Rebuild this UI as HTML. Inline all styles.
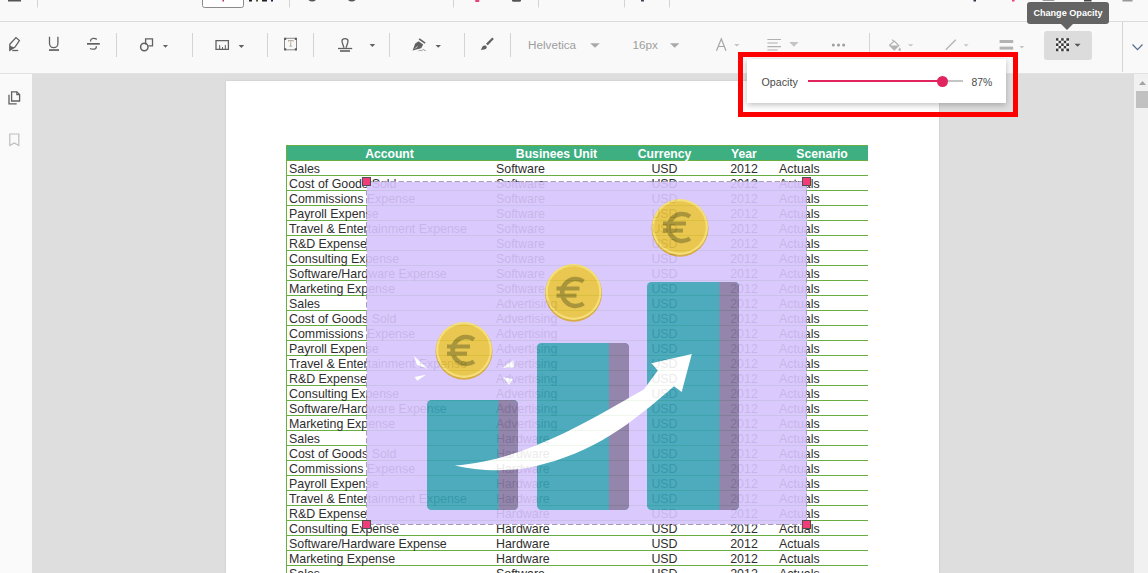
<!DOCTYPE html>
<html><head><meta charset="utf-8"><style>
*{box-sizing:border-box}
html,body{margin:0;padding:0}
body{width:1148px;height:573px;overflow:hidden;position:relative;background:#f8f8f8;font-family:"Liberation Sans",sans-serif}
.abs{position:absolute}
#tb1{position:absolute;left:0;top:0;width:1148px;height:22px;background:#f9f9f9;border-bottom:1px solid #dcdcdc}
#tb2{position:absolute;left:0;top:22px;width:1148px;height:52px;background:#f9f9f9;border-bottom:1px solid #e2e2e2}
.sep{position:absolute;width:1px;background:#d6d6d6}
#side{position:absolute;left:0;top:74px;width:32px;height:499px;background:#fafafa}
#view{position:absolute;left:32px;top:74px;width:1102px;height:499px;background:#dedede}
#scroll{position:absolute;left:1134px;top:74px;width:14px;height:499px;background:#f1f1f1}
#page{position:absolute;left:226px;top:81px;width:713px;height:492px;background:#fff;box-shadow:0 0 2px rgba(0,0,0,0.12)}
.th{position:absolute;left:286px;width:582px;height:16px;background:#3daf80;border-top:1px solid #68ae40;border-bottom:1px solid #68ae40}
.ht{position:absolute;top:147px;height:15px;line-height:15px;text-align:center;color:#fff;font-weight:bold;font-size:12.2px}
.rl{position:absolute;left:286px;width:582px;height:1px;background:#68ae40}
.vl{position:absolute;left:286px;top:145px;width:1px;height:428px;background:#68ae40}
.tx{position:absolute;height:15px;line-height:19px;font-size:12.4px;color:#2e2e2e;white-space:nowrap}
.tx.c{text-align:center}
#ov{position:absolute;left:367px;top:182px;width:440px;height:342px;opacity:0.9}
.hd{position:absolute;width:9px;height:9px;background:#f23c7a;border:1px solid #505050}
.tbt{font-size:11.7px;line-height:15px;white-space:nowrap}
#tip{position:absolute;left:1027px;top:2px;width:82px;height:22px;background:#646464;border-radius:3px;color:#fff;font-size:9.1px;font-weight:bold;line-height:22px;text-align:center}
#tip:after{content:"";position:absolute;left:34px;top:22px;border-left:6px solid transparent;border-right:6px solid transparent;border-top:6px solid #646464}
#red{position:absolute;left:738px;top:52px;width:280px;height:65px;border:5px solid #ff0000}
#pop{position:absolute;left:747px;top:59px;width:259px;height:44px;background:#fff;box-shadow:0 2px 6px rgba(0,0,0,0.25)}
</style></head>
<body>
<div id="tb1"></div>
<div id="tb2"></div>
<div class="abs" style="left:1044px;top:31px;width:48px;height:29px;background:#dcdcdc;border-radius:3px"></div>
<svg class="abs" style="left:0;top:0" width="1148" height="73" viewBox="0 0 1148 73">
<g fill="none" stroke="#d4d4d4" stroke-width="1">
<path d="M37.5,0 V7.5 M289.5,0 V7.5 M453.5,0 V7.5 M538.5,0 V7.5 M624.5,0 V7.5 M669.5,0 V7.5"/>
<path d="M116.5,33 V57 M192.5,33 V57 M267.5,33 V57 M313.5,33 V57 M389.5,33 V57 M464.5,33 V57 M510.5,33 V57 M869.5,33 V57 M1122.5,22 V72"/>
</g>
<!-- row1 marks -->
<rect x="8" y="0" width="13" height="1.5" fill="#555"/>
<rect x="202.5" y="-4" width="41" height="11.5" rx="2" fill="#fff" stroke="#8a8a8a" stroke-width="1"/>
<rect x="222.5" y="0" width="1.5" height="1.5" fill="#b0306a"/>
<rect x="249" y="0" width="3" height="1.5" fill="#222"/><rect x="256" y="0" width="2" height="1.5" fill="#553"/><rect x="262" y="0" width="5" height="1.5" fill="#222"/><rect x="271" y="0" width="2" height="1.5" fill="#225"/>
<circle cx="312.2" cy="-3.8" r="4.6" fill="none" stroke="#555" stroke-width="1.5"/>
<circle cx="351.8" cy="-3.8" r="4.6" fill="none" stroke="#555" stroke-width="1.5"/>
<rect x="475" y="0" width="4.5" height="2" rx="1" fill="#e8407a"/>
<rect x="512" y="-2" width="9" height="3.8" rx="1.5" fill="#555"/>
<rect x="641" y="0" width="3" height="1.5" fill="#445"/>
<rect x="973.5" y="0" width="2.5" height="1.5" fill="#334"/>
<rect x="1012" y="0" width="2.5" height="1.5" fill="#e8407a"/>
<rect x="1042.5" y="-2" width="12" height="3" rx="1" fill="#999"/>
<rect x="1084" y="0" width="7.5" height="1.5" fill="#444"/>
<rect x="1122.5" y="0" width="10" height="1.5" fill="#999"/>
<!-- row2 icons -->
<g fill="none" stroke="#616161" stroke-width="1.3" stroke-linejoin="miter">
<path d="M9.8,44.2 L16,37.6 L19.4,40.5 L15,47 L9.8,50.3 Z"/>
<path d="M12.3,50.5 H18.2"/>
<path d="M49.5,36.8 V43.5 A4.2,4.2 0 0 0 57.9,43.5 V36.8"/>
<path d="M96.8,39.4 Q95,38.2 93.3,38.4 Q90.2,38.8 90.6,41.5"/>
<path d="M96.2,46.2 Q96.8,49.2 93,49.2 Q91,49.2 90,48.5"/>
<path d="M145.6,44.4 V38.9 H152.5 V45.8 H148.4"/>
<circle cx="144.3" cy="47" r="3.7" stroke-width="1.5"/>
<path d="M216,40.6 H228.4 V49.3 H216 Z"/>
<path d="M338,48.5 H352.2"/>
<path d="M344,47.8 C343,44.8 341.9,42.6 342,40.8 C342.3,37.8 347.7,37.8 348,40.8 C348.1,42.6 347,44.8 346,47.8"/>
<path d="M284.5,38.3 H296.5 V49.8 H284.5 Z" stroke-width="0.9" stroke="#7a7a7a"/>
<path d="M945.8,49.8 L955.8,39.8" stroke="#b3b3b3"/>
<path d="M767.4,39.5 H781 M767.4,43 H777.7 M767.4,46.6 H781 M767.4,50 H777.7" stroke="#b0b0b0" stroke-width="1.2"/>
<path d="M889.6,45.3 L894.2,41 L898.8,45.5 L894.2,50 Z M892,39.6 L894.2,41.6" stroke="#b3b3b3" stroke-width="1.2"/>
<path d="M1132.5,44.5 L1137.5,49.6 L1142.5,44.5" stroke="#56708c" stroke-width="1.3"/>
<path d="M716.5,50.8 L721.3,38.8 L726,50.8 M718.2,46.5 H724.4" stroke="#a6a6a6" stroke-width="1.2"/>
</g>
<g fill="#616161">
<path d="M10,45.8 L14.5,47.4 L9.8,50.3 Z"/>
<rect x="49" y="49.2" width="10" height="1.7"/>
<rect x="87" y="43" width="12.8" height="1.7"/>
<path d="M162.9,45.1 H168 L165.45,47.8 Z"/>
<path d="M219.2,44.9 h1 v4 h-1 Z M222,46.9 h1 v2 h-1 Z M224.8,44.9 h1 v4 h-1 Z"/>
<path d="M238.6,45.1 H244.2 L241.4,48 Z"/>
<rect x="284" y="37.8" width="2.2" height="2.2"/><rect x="294.8" y="37.8" width="2.2" height="2.2"/><rect x="284" y="48.2" width="2.2" height="2.2"/><rect x="294.8" y="48.2" width="2.2" height="2.2"/>
<rect x="340" y="50.2" width="10" height="1.6"/>
<path d="M369.6,44.1 H375.2 L372.4,46.9 Z"/>
<path d="M419.6,38.3 L425.6,42.5 L424.6,43.8 L418.6,39.6 Z"/>
<path d="M415.2,43.6 L418.6,41.2 L423.2,44.6 L421.2,48.2 L412.6,50.6 Z M413.6,49.6 L417.2,46.2 L417.8,46.8 Z" fill-rule="evenodd"/>
<path d="M435.5,45.1 H441 L438.25,47.8 Z"/>
<path d="M493.8,38.9 L487.8,45.3 L486,43.7 L492.3,37.6 Z"/>
<path d="M485.5,45.5 C487.5,46.2 487.2,49.3 484,49.6 L480.8,49.9 C482,48.8 481.8,46.5 483.4,45.8 Z"/>
<path d="M1074.5,43.8 H1080.6 L1077.55,46.8 Z" fill="#555"/>
</g>
<path d="M418.5,50.8 c1.5,-1.2 2.5,0.5 3.5,-0.4 c1,-0.9 1.7,-1.5 2.2,-0.2 l1.5,0.5" fill="none" stroke="#8a8a8a" stroke-width="0.9"/>
<g fill="#a9a9a9">
<path d="M288,40.3 H293.6 V41.8 H292.8 V41.1 H291.2 V45.8 H292.2 V46.6 H289.4 V45.8 H290.4 V41.1 H288.8 V41.8 H288 Z" fill="#a89a8a"/>
</g>
<g fill="#c4c4c4">
<path d="M734,44.1 H739.6 L736.8,46.5 Z"/>
<path d="M789.2,41.9 H798.6 L793.9,46.8 Z"/>
<path d="M907.9,44.3 H913.4 L910.65,46.5 Z"/>
<path d="M963.6,44.3 H968.7 L966.15,46.5 Z"/>
<path d="M1019.5,46.1 H1024.2 L1021.85,48.6 Z"/>
<path d="M590.2,43.2 H599.8 L595,47.8 Z" fill="#a9a9a9"/>
<path d="M670,43.2 H679.4 L674.7,47.8 Z" fill="#a9a9a9"/>
</g>
<g fill="#b3b3b3">
<path d="M889.8,45.5 H898.6 L894.2,49.9 Z"/>
<path d="M899.7,47.2 L901,49.6 A1.2,1.2 0 0 1 898.4,49.6 Z"/>
<rect x="999.6" y="40" width="13.6" height="3"/>
<rect x="999.6" y="46.6" width="13.6" height="3"/>
</g>
<g fill="#9e9e9e">
<circle cx="833.3" cy="44.9" r="1.5"/><circle cx="838.5" cy="44.9" r="1.5"/><circle cx="843.6" cy="44.9" r="1.5"/>
</g>
<g><rect x="1056.0" y="38.2" width="2.6" height="2.6" fill="#3a3a3a"/><rect x="1058.6" y="38.2" width="2.6" height="2.6" fill="#f4f4f4"/><rect x="1061.2" y="38.2" width="2.6" height="2.6" fill="#3a3a3a"/><rect x="1063.8" y="38.2" width="2.6" height="2.6" fill="#f4f4f4"/><rect x="1066.4" y="38.2" width="2.6" height="2.6" fill="#3a3a3a"/><rect x="1056.0" y="40.8" width="2.6" height="2.6" fill="#f4f4f4"/><rect x="1058.6" y="40.8" width="2.6" height="2.6" fill="#3a3a3a"/><rect x="1061.2" y="40.8" width="2.6" height="2.6" fill="#f4f4f4"/><rect x="1063.8" y="40.8" width="2.6" height="2.6" fill="#3a3a3a"/><rect x="1066.4" y="40.8" width="2.6" height="2.6" fill="#f4f4f4"/><rect x="1056.0" y="43.4" width="2.6" height="2.6" fill="#3a3a3a"/><rect x="1058.6" y="43.4" width="2.6" height="2.6" fill="#f4f4f4"/><rect x="1061.2" y="43.4" width="2.6" height="2.6" fill="#3a3a3a"/><rect x="1063.8" y="43.4" width="2.6" height="2.6" fill="#f4f4f4"/><rect x="1066.4" y="43.4" width="2.6" height="2.6" fill="#3a3a3a"/><rect x="1056.0" y="46.0" width="2.6" height="2.6" fill="#f4f4f4"/><rect x="1058.6" y="46.0" width="2.6" height="2.6" fill="#3a3a3a"/><rect x="1061.2" y="46.0" width="2.6" height="2.6" fill="#f4f4f4"/><rect x="1063.8" y="46.0" width="2.6" height="2.6" fill="#3a3a3a"/><rect x="1066.4" y="46.0" width="2.6" height="2.6" fill="#f4f4f4"/><rect x="1056.0" y="48.6" width="2.6" height="2.6" fill="#3a3a3a"/><rect x="1058.6" y="48.6" width="2.6" height="2.6" fill="#f4f4f4"/><rect x="1061.2" y="48.6" width="2.6" height="2.6" fill="#3a3a3a"/><rect x="1063.8" y="48.6" width="2.6" height="2.6" fill="#f4f4f4"/><rect x="1066.4" y="48.6" width="2.6" height="2.6" fill="#3a3a3a"/></g>
</svg>

<div class="abs tbt" style="left:528px;top:37px;color:#9e9e9e">Helvetica</div>
<div class="abs tbt" style="left:632.5px;top:37px;color:#9e9e9e">16px</div>

<div id="side"></div>
<svg class="abs" style="left:0;top:73px" width="32" height="100" viewBox="0 73 32 100">
<g fill="none" stroke="#616161" stroke-width="1.3">
<path d="M11.6,91.8 H16.8 L19.6,94.6 V101 H11.6 Z"/>
<path d="M16.8,91.8 V94.6 H19.6" stroke-width="1.1"/>
<path d="M9,94.8 V103.9 H16.7"/>
</g>
<path d="M9.8,134 H18.8 V145.5 L14.3,143 L9.8,145.5 Z" fill="none" stroke="#bdbdbd" stroke-width="1.2"/>
</svg>
<div id="view"></div>
<div id="scroll"></div>
<svg class="abs" style="left:1134px;top:73px" width="14" height="40"><path d="M5,11.9 L8.5,8 L12,11.9 Z" fill="#a3a3a3"/><rect x="2" y="18" width="12" height="17" fill="#c1c1c1"/></svg>
<div id="page"></div>
<div class="th" style="top:145px"></div>
<div class="ht" style="left:286px;width:207px">Account</div>
<div class="ht" style="left:493px;width:127px">Businees Unit</div>
<div class="ht" style="left:620px;width:89px">Currency</div>
<div class="ht" style="left:709px;width:70px">Year</div>
<div class="ht" style="left:776px;width:92px">Scenario</div>
<div class="rl" style="top:175px"></div>
<div class="tx" style="left:289px;top:160px">Sales</div>
<div class="tx" style="left:496px;top:160px">Software</div>
<div class="tx c" style="left:620px;width:89px;top:160px">USD</div>
<div class="tx c" style="left:709px;width:70px;top:160px">2012</div>
<div class="tx" style="left:779px;top:160px">Actuals</div>
<div class="rl" style="top:190px"></div>
<div class="tx" style="left:289px;top:175px">Cost of Goods Sold</div>
<div class="tx" style="left:496px;top:175px">Software</div>
<div class="tx c" style="left:620px;width:89px;top:175px">USD</div>
<div class="tx c" style="left:709px;width:70px;top:175px">2012</div>
<div class="tx" style="left:779px;top:175px">Actuals</div>
<div class="rl" style="top:205px"></div>
<div class="tx" style="left:289px;top:190px">Commissions Expense</div>
<div class="tx" style="left:496px;top:190px">Software</div>
<div class="tx c" style="left:620px;width:89px;top:190px">USD</div>
<div class="tx c" style="left:709px;width:70px;top:190px">2012</div>
<div class="tx" style="left:779px;top:190px">Actuals</div>
<div class="rl" style="top:220px"></div>
<div class="tx" style="left:289px;top:205px">Payroll Expense</div>
<div class="tx" style="left:496px;top:205px">Software</div>
<div class="tx c" style="left:620px;width:89px;top:205px">USD</div>
<div class="tx c" style="left:709px;width:70px;top:205px">2012</div>
<div class="tx" style="left:779px;top:205px">Actuals</div>
<div class="rl" style="top:235px"></div>
<div class="tx" style="left:289px;top:220px">Travel &amp; Entertainment Expense</div>
<div class="tx" style="left:496px;top:220px">Software</div>
<div class="tx c" style="left:620px;width:89px;top:220px">USD</div>
<div class="tx c" style="left:709px;width:70px;top:220px">2012</div>
<div class="tx" style="left:779px;top:220px">Actuals</div>
<div class="rl" style="top:250px"></div>
<div class="tx" style="left:289px;top:235px">R&amp;D Expense</div>
<div class="tx" style="left:496px;top:235px">Software</div>
<div class="tx c" style="left:620px;width:89px;top:235px">USD</div>
<div class="tx c" style="left:709px;width:70px;top:235px">2012</div>
<div class="tx" style="left:779px;top:235px">Actuals</div>
<div class="rl" style="top:265px"></div>
<div class="tx" style="left:289px;top:250px">Consulting Expense</div>
<div class="tx" style="left:496px;top:250px">Software</div>
<div class="tx c" style="left:620px;width:89px;top:250px">USD</div>
<div class="tx c" style="left:709px;width:70px;top:250px">2012</div>
<div class="tx" style="left:779px;top:250px">Actuals</div>
<div class="rl" style="top:280px"></div>
<div class="tx" style="left:289px;top:265px">Software/Hardware Expense</div>
<div class="tx" style="left:496px;top:265px">Software</div>
<div class="tx c" style="left:620px;width:89px;top:265px">USD</div>
<div class="tx c" style="left:709px;width:70px;top:265px">2012</div>
<div class="tx" style="left:779px;top:265px">Actuals</div>
<div class="rl" style="top:295px"></div>
<div class="tx" style="left:289px;top:280px">Marketing Expense</div>
<div class="tx" style="left:496px;top:280px">Software</div>
<div class="tx c" style="left:620px;width:89px;top:280px">USD</div>
<div class="tx c" style="left:709px;width:70px;top:280px">2012</div>
<div class="tx" style="left:779px;top:280px">Actuals</div>
<div class="rl" style="top:310px"></div>
<div class="tx" style="left:289px;top:295px">Sales</div>
<div class="tx" style="left:496px;top:295px">Advertising</div>
<div class="tx c" style="left:620px;width:89px;top:295px">USD</div>
<div class="tx c" style="left:709px;width:70px;top:295px">2012</div>
<div class="tx" style="left:779px;top:295px">Actuals</div>
<div class="rl" style="top:325px"></div>
<div class="tx" style="left:289px;top:310px">Cost of Goods Sold</div>
<div class="tx" style="left:496px;top:310px">Advertising</div>
<div class="tx c" style="left:620px;width:89px;top:310px">USD</div>
<div class="tx c" style="left:709px;width:70px;top:310px">2012</div>
<div class="tx" style="left:779px;top:310px">Actuals</div>
<div class="rl" style="top:340px"></div>
<div class="tx" style="left:289px;top:325px">Commissions Expense</div>
<div class="tx" style="left:496px;top:325px">Advertising</div>
<div class="tx c" style="left:620px;width:89px;top:325px">USD</div>
<div class="tx c" style="left:709px;width:70px;top:325px">2012</div>
<div class="tx" style="left:779px;top:325px">Actuals</div>
<div class="rl" style="top:355px"></div>
<div class="tx" style="left:289px;top:340px">Payroll Expense</div>
<div class="tx" style="left:496px;top:340px">Advertising</div>
<div class="tx c" style="left:620px;width:89px;top:340px">USD</div>
<div class="tx c" style="left:709px;width:70px;top:340px">2012</div>
<div class="tx" style="left:779px;top:340px">Actuals</div>
<div class="rl" style="top:370px"></div>
<div class="tx" style="left:289px;top:355px">Travel &amp; Entertainment Expense</div>
<div class="tx" style="left:496px;top:355px">Advertising</div>
<div class="tx c" style="left:620px;width:89px;top:355px">USD</div>
<div class="tx c" style="left:709px;width:70px;top:355px">2012</div>
<div class="tx" style="left:779px;top:355px">Actuals</div>
<div class="rl" style="top:385px"></div>
<div class="tx" style="left:289px;top:370px">R&amp;D Expense</div>
<div class="tx" style="left:496px;top:370px">Advertising</div>
<div class="tx c" style="left:620px;width:89px;top:370px">USD</div>
<div class="tx c" style="left:709px;width:70px;top:370px">2012</div>
<div class="tx" style="left:779px;top:370px">Actuals</div>
<div class="rl" style="top:400px"></div>
<div class="tx" style="left:289px;top:385px">Consulting Expense</div>
<div class="tx" style="left:496px;top:385px">Advertising</div>
<div class="tx c" style="left:620px;width:89px;top:385px">USD</div>
<div class="tx c" style="left:709px;width:70px;top:385px">2012</div>
<div class="tx" style="left:779px;top:385px">Actuals</div>
<div class="rl" style="top:415px"></div>
<div class="tx" style="left:289px;top:400px">Software/Hardware Expense</div>
<div class="tx" style="left:496px;top:400px">Advertising</div>
<div class="tx c" style="left:620px;width:89px;top:400px">USD</div>
<div class="tx c" style="left:709px;width:70px;top:400px">2012</div>
<div class="tx" style="left:779px;top:400px">Actuals</div>
<div class="rl" style="top:430px"></div>
<div class="tx" style="left:289px;top:415px">Marketing Expense</div>
<div class="tx" style="left:496px;top:415px">Advertising</div>
<div class="tx c" style="left:620px;width:89px;top:415px">USD</div>
<div class="tx c" style="left:709px;width:70px;top:415px">2012</div>
<div class="tx" style="left:779px;top:415px">Actuals</div>
<div class="rl" style="top:445px"></div>
<div class="tx" style="left:289px;top:430px">Sales</div>
<div class="tx" style="left:496px;top:430px">Hardware</div>
<div class="tx c" style="left:620px;width:89px;top:430px">USD</div>
<div class="tx c" style="left:709px;width:70px;top:430px">2012</div>
<div class="tx" style="left:779px;top:430px">Actuals</div>
<div class="rl" style="top:460px"></div>
<div class="tx" style="left:289px;top:445px">Cost of Goods Sold</div>
<div class="tx" style="left:496px;top:445px">Hardware</div>
<div class="tx c" style="left:620px;width:89px;top:445px">USD</div>
<div class="tx c" style="left:709px;width:70px;top:445px">2012</div>
<div class="tx" style="left:779px;top:445px">Actuals</div>
<div class="rl" style="top:475px"></div>
<div class="tx" style="left:289px;top:460px">Commissions Expense</div>
<div class="tx" style="left:496px;top:460px">Hardware</div>
<div class="tx c" style="left:620px;width:89px;top:460px">USD</div>
<div class="tx c" style="left:709px;width:70px;top:460px">2012</div>
<div class="tx" style="left:779px;top:460px">Actuals</div>
<div class="rl" style="top:490px"></div>
<div class="tx" style="left:289px;top:475px">Payroll Expense</div>
<div class="tx" style="left:496px;top:475px">Hardware</div>
<div class="tx c" style="left:620px;width:89px;top:475px">USD</div>
<div class="tx c" style="left:709px;width:70px;top:475px">2012</div>
<div class="tx" style="left:779px;top:475px">Actuals</div>
<div class="rl" style="top:505px"></div>
<div class="tx" style="left:289px;top:490px">Travel &amp; Entertainment Expense</div>
<div class="tx" style="left:496px;top:490px">Hardware</div>
<div class="tx c" style="left:620px;width:89px;top:490px">USD</div>
<div class="tx c" style="left:709px;width:70px;top:490px">2012</div>
<div class="tx" style="left:779px;top:490px">Actuals</div>
<div class="rl" style="top:520px"></div>
<div class="tx" style="left:289px;top:505px">R&amp;D Expense</div>
<div class="tx" style="left:496px;top:505px">Hardware</div>
<div class="tx c" style="left:620px;width:89px;top:505px">USD</div>
<div class="tx c" style="left:709px;width:70px;top:505px">2012</div>
<div class="tx" style="left:779px;top:505px">Actuals</div>
<div class="rl" style="top:535px"></div>
<div class="tx" style="left:289px;top:520px">Consulting Expense</div>
<div class="tx" style="left:496px;top:520px">Hardware</div>
<div class="tx c" style="left:620px;width:89px;top:520px">USD</div>
<div class="tx c" style="left:709px;width:70px;top:520px">2012</div>
<div class="tx" style="left:779px;top:520px">Actuals</div>
<div class="rl" style="top:550px"></div>
<div class="tx" style="left:289px;top:535px">Software/Hardware Expense</div>
<div class="tx" style="left:496px;top:535px">Hardware</div>
<div class="tx c" style="left:620px;width:89px;top:535px">USD</div>
<div class="tx c" style="left:709px;width:70px;top:535px">2012</div>
<div class="tx" style="left:779px;top:535px">Actuals</div>
<div class="rl" style="top:565px"></div>
<div class="tx" style="left:289px;top:550px">Marketing Expense</div>
<div class="tx" style="left:496px;top:550px">Hardware</div>
<div class="tx c" style="left:620px;width:89px;top:550px">USD</div>
<div class="tx c" style="left:709px;width:70px;top:550px">2012</div>
<div class="tx" style="left:779px;top:550px">Actuals</div>
<div class="rl" style="top:580px"></div>
<div class="tx" style="left:289px;top:565px">Sales</div>
<div class="tx" style="left:496px;top:565px">Software</div>
<div class="tx c" style="left:620px;width:89px;top:565px">USD</div>
<div class="tx c" style="left:709px;width:70px;top:565px">2012</div>
<div class="tx" style="left:779px;top:565px">Actuals</div>
<div class="vl"></div>
<svg id="ov" width="440" height="342" viewBox="0 0 440 342">
<rect x="0" y="0" width="440" height="342" fill="#d7c4fc"/>
<g>
<rect x="60" y="218" width="91" height="110" rx="4.5" fill="#3aa3b6"/>
<path d="M131.5,218 H146.5 a4.5,4.5 0 0 1 4.5,4.5 V323.5 a4.5,4.5 0 0 1 -4.5,4.5 H131.5 Z" fill="#8878a4"/>
<rect x="170" y="161" width="92" height="167" rx="4.5" fill="#3aa3b6"/>
<path d="M242,161 H257.5 a4.5,4.5 0 0 1 4.5,4.5 V323.5 a4.5,4.5 0 0 1 -4.5,4.5 H242 Z" fill="#8878a4"/>
<rect x="280" y="100" width="92" height="228" rx="4.5" fill="#3aa3b6"/>
<path d="M352.5,100 H367.5 a4.5,4.5 0 0 1 4.5,4.5 V323.5 a4.5,4.5 0 0 1 -4.5,4.5 H352.5 Z" fill="#8878a4"/>
</g>
<path d="M87.7,283.5 C160,278.8 230.3,233.4 276.8,207.5 L290.8,188.4 L284.3,181.2 L324.8,172.1 L314.7,210 L307,204.3 C265.2,240.4 228.5,270.8 165.2,285 C140,290 110,289 87.7,283.5 Z" fill="#ffffff"/>
<g fill="#ffffff">
<path d="M47,174 L61,187 L50,183 Z"/>
<path d="M47.6,194.9 L59,192.7 L50.2,198.8 Z"/>
<path d="M135.2,186.1 L146.1,178.3 L147.5,185.3 Z"/>
<path d="M136.1,195.3 L146.1,197.1 L141.8,202.7 Z"/>
</g>
<g id="coin1" transform="translate(97,168)">
<circle cx="0" cy="1.2" r="28.5" fill="#d4a232"/>
<circle cx="0" cy="0" r="28" fill="#f4dc6c"/>
<circle cx="0" cy="0" r="25.8" fill="#e8c23e"/>
<path d="M10,-10.5 A13.5,13.5 0 1 0 10,11.5" fill="none" stroke="#a08a28" stroke-width="4.6"/>
<rect x="-17" y="-5.5" width="23" height="4" fill="#a08a28"/>
<rect x="-17" y="1.6" width="20" height="4" fill="#a08a28"/>
</g>
<use href="#coin1" x="109.5" y="-58"/>
<use href="#coin1" x="216" y="-123"/>
</svg>
<svg class="abs" style="left:366px;top:181px" width="442" height="345"><rect x="0.5" y="0.5" width="440" height="343" fill="none" stroke="#a8a0b8" stroke-width="1" stroke-dasharray="5.5,2.5"/></svg>
<div class="hd" style="left:362px;top:177px"></div>
<div class="hd" style="left:802px;top:177px"></div>
<div class="hd" style="left:362px;top:520px"></div>
<div class="hd" style="left:802px;top:520px"></div>
<div id="pop"></div>
<div class="abs" style="left:761.5px;top:76px;font-size:10.7px;line-height:13px;color:#4a4a4a">Opacity</div>
<div class="abs" style="left:808px;top:80px;width:134px;height:2px;background:#e0245e"></div>
<div class="abs" style="left:942px;top:80px;width:21px;height:2px;background:#c4c4c4"></div>
<div class="abs" style="left:936.5px;top:75.5px;width:11.5px;height:11.5px;border-radius:50%;background:#e0245e"></div>
<div class="abs" style="left:971.5px;top:76px;font-size:10.4px;line-height:13px;color:#4a4a4a">87%</div>
<div id="red"></div>
<div id="tip">Change Opacity</div>
</body></html>
